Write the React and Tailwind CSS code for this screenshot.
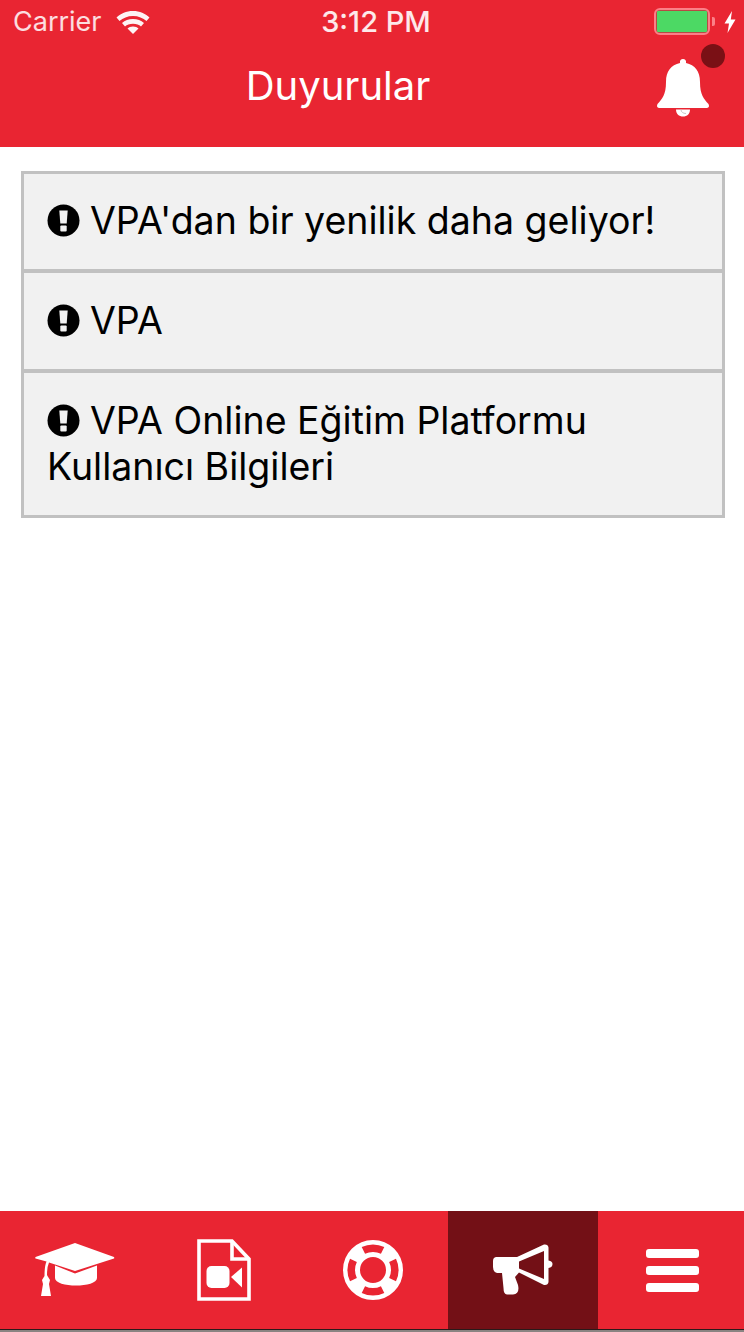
import React from "react";

function Cap() {
  return (
    <svg width="80" height="54" viewBox="0 0 80 54" fill="#fff">
      <path d="M40 0 L79 14 Q79.500 15 79 15.500 L40 28 L14 19.500 Q12 24 12 32 L12.500 33 L15 37 L14 41 L16 53 L6 53 L8 41 L7 37 L9.500 33 Q9.500 23 11.500 18.500 L0.500 15.500 Q0 15 0.500 14 Z" />
      <path d="M20 22.500 L40 30.500 L62 22.500 L62 35 C62 45 20 45 20 35 Z" />
    </svg>
  );
}

function FileVideo() {
  return (
    <svg width="54" height="62" viewBox="0 0 54 62" fill="none">
      <path d="M2 2 H35 L52 20 V60 H2 Z" stroke="#fff" strokeWidth="3.600" />
      <path d="M35 2 V20 H52" stroke="#fff" strokeWidth="3.600" />
      <rect x="9.500" y="27" width="23" height="22" rx="5" fill="#fff" />
      <path d="M34 38 L45 28.500 V48.500 Z" fill="#fff" />
    </svg>
  );
}

function Ring() {
  return (
    <svg width="62" height="62" viewBox="0 0 62 62" fill="none">
      <circle cx="31" cy="31" r="21.500" stroke="#fff" strokeWidth="17" />
      <circle cx="31" cy="31" r="21.800" stroke="#e92532" strokeWidth="7.600" pathLength="136.960" strokeDasharray="20 14.240" strokeDashoffset="10" />
    </svg>
  );
}

function Megaphone() {
  return (
    <svg width="60" height="52" viewBox="0 0 60 52" fill="#fff">
      <path fillRule="evenodd" d="M3 13 L24 13 L51 0.500 Q55 0 55.500 3.500 L55.500 16.500 Q59.500 17 59.500 20 Q59.500 23.500 55.500 24 L55.500 38 Q55 41.500 51 41 L26 28.500 L22 33 L25 41 Q27 50 20 50.500 L14 50.500 Q10.500 50 10.500 44 L9 29 L4 29 Q0 28 0 23 L0 17 Q0 13.500 3 13 Z M26 17.500 L26 24.500 L51 35 L51 7 Z" />
    </svg>
  );
}

function Wifi() {
  return (
    <svg width="34" height="24" viewBox="0 0 34 24" fill="#fff" opacity="0.95">
      <path d="M17 1 C24 1 29 3.500 33.500 7.500 L30.500 11 C27 8 22.500 6 17 6 C11.500 6 7 8 3.500 11 L0.500 7.500 C5 3.500 10 1 17 1 Z" />
      <path d="M17 9 C21.500 9 25 10.500 28 13 L25 16.500 C23 14.800 20.500 13.800 17 13.800 C13.500 13.800 11 14.800 9 16.500 L6 13 C9 10.500 12.500 9 17 9 Z" />
      <path d="M17 16.500 C19.500 16.500 21.200 17.200 22.500 18.500 L17 24 L11.500 18.500 C12.800 17.200 14.500 16.500 17 16.500 Z" />
    </svg>
  );
}

function Bolt() {
  return (
    <svg width="12" height="22" viewBox="0 0 12 22" fill="#fff">
      <path d="M8 0 L0.500 12.500 L5 12.500 L3.500 22 L11.500 8.500 L6.800 8.500 Z" />
    </svg>
  );
}

function Bell() {
  return (
    <svg width="54" height="58" viewBox="0 0 54 58" fill="#fff">
      <path d="M27 0 C29 0 30.500 1.500 30 4 C39 6 44 12 44 23 C44 36 48 40 52.500 45 Q54 48.500 51 49 L3 49 Q0 48.500 1.500 45 C6 40 10 36 10 23 C10 12 15 6 24 4 C23.500 1.500 25 0 27 0 Z" />
      <path d="M20 50.500 H34 C34 55 31 57.500 27 57.500 C23 57.500 20 55 20 50.500 Z" />
      <path d="M25 50.500 C25 53 27 54.500 30 54.500" stroke="#c9c9c9" strokeWidth="1" fill="none" />
    </svg>
  );
}

function Alert() {
  return (
    <svg width="33" height="33" viewBox="0 0 33 33" className="inline-block align-[-3px] mr-[10px]">
      <circle cx="16.500" cy="16.500" r="16" fill="#000" />
      <path d="M12.300 6.500 H20.700 L19.700 19.500 H13.300 Z" fill="#f1f1f1" />
      <rect x="13.300" y="21.500" width="6.400" height="6" rx="1" fill="#f1f1f1" />
    </svg>
  );
}

function Row({ children, first, last }) {
  return (
    <div className={`bg-[#f1f1f1] border-x-[3px] border-[#c1c1c1] pl-[23px] pr-[22px] pb-[25px] text-[37.500px] leading-[46px] text-black ${first ? "border-t-[3px] pt-[24px]" : "border-t-[4px] pt-[25px]"} ${last ? "border-b-[3px]" : ""}`}>
      <Alert />
      {children}
    </div>
  );
}

export default function App() {
  return (
    <div className="w-[744px] h-[1332px] flex flex-col bg-white overflow-hidden font-['Inter','Liberation_Sans',sans-serif]">
      <header className="h-[147px] bg-[#e92532] shrink-0 text-white">
        <div className="h-[42px] grid grid-cols-3 items-center px-[13px]">
          <div className="flex items-center gap-[14px] text-[27px] text-white/85">
            <span>Carrier</span>
            <Wifi />
          </div>
          <div className="text-center text-[29px] font-medium whitespace-nowrap text-white/90 pl-[8px]">3:12 PM</div>
          <div className="flex items-center justify-end -mr-[5px]">
            <div className="w-[56px] h-[27px] rounded-[6px] border-[2px] border-[#fb8088] p-[1px] bg-[#b84a44]">
              <div className="w-full h-full bg-[#4cd964] rounded-[1px]" />
            </div>
            <div className="w-[3px] h-[9px] bg-[#fb8088] rounded-r-[2px] ml-[2px] mr-[9px]" />
            <Bolt />
          </div>
        </div>
        <div className="relative h-[105px]">
          <div className="text-center text-[40px] leading-[44px] pt-[22px] pr-[68px]">Duyurular</div>
          <div className="absolute left-[656px] top-[17px]"><Bell /></div>
          <div className="absolute left-[701px] top-[2px] w-[24px] h-[24px] rounded-full bg-[#7a1015]" />
        </div>
      </header>

      <main className="flex-1 pt-[24px] pl-[21px] pr-[19px]">
        <Row first>VPA'dan bir yenilik daha geliyor!</Row>
        <Row>VPA</Row>
        <Row last>VPA Online Eğitim Platformu Kullanıcı Bilgileri</Row>
      </main>

      <nav className="h-[118px] shrink-0 grid grid-cols-[149.400px_149.400px_149.400px_149.400px_149.400px] bg-[#e92532] overflow-hidden">
        <div className="flex items-center justify-center"><Cap /></div>
        <div className="flex items-center justify-center"><FileVideo /></div>
        <div className="flex items-center justify-center"><Ring /></div>
        <div className="flex items-center justify-center bg-[#731016]"><Megaphone /></div>
        <div className="flex flex-col items-center justify-center gap-[8px]">
          <div className="w-[53px] h-[9px] rounded-[3px] bg-white" />
          <div className="w-[53px] h-[9px] rounded-[3px] bg-white" />
          <div className="w-[53px] h-[9px] rounded-[3px] bg-white" />
        </div>
      </nav>
      <div className="h-[3px] shrink-0 bg-[#8a8482] border-t border-[#2a1a1a]" />
    </div>
  );
}
